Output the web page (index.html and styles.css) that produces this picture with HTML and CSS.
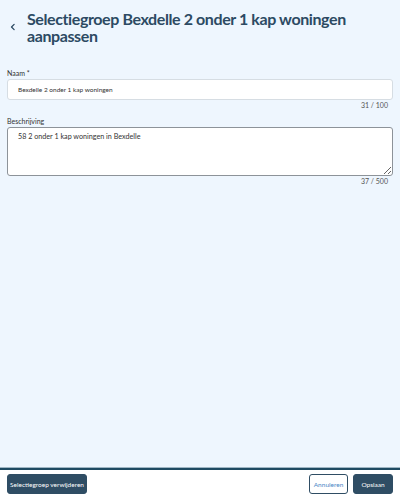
FILE: index.html
```html
<!DOCTYPE html>
<html lang="nl">
<head>
<meta charset="utf-8">
<title>Selectiegroep aanpassen</title>
<link rel="stylesheet" href="styles.css">
</head>
<body>
<div class="page">
  <main class="content">
    <header class="title-row">
      <button class="back" type="button" aria-label="Terug">
        <svg viewBox="0 0 8 10" width="6" height="8" aria-hidden="true"><path d="M5.5 1.5 L2 5 L5.5 8.5" fill="none" stroke="#2c4a63" stroke-width="1.7" stroke-linecap="round" stroke-linejoin="round"/></svg>
      </button>
      <h1 class="title">Selectiegroep Bexdelle 2 onder 1 kap woningen aanpassen</h1>
    </header>
    <form class="form">
      <div class="field">
        <label class="label" for="naam">Naam *</label>
        <input class="input" id="naam" type="text" value="Bexdelle 2 onder 1 kap woningen">
        <div class="counter">31 / 100</div>
      </div>
      <div class="field">
        <label class="label" for="beschrijving">Beschrijving</label>
        <textarea class="textarea" id="beschrijving">58 2 onder 1 kap woningen in Bexdelle</textarea>
        <div class="counter">37 / 500</div>
      </div>
    </form>
  </main>
  <footer class="actions">
    <button class="btn btn-primary btn-delete" type="button">Selectiegroep verwijderen</button>
    <div class="actions-right">
      <button class="btn btn-outline" type="button">Annuleren</button>
      <button class="btn btn-primary btn-save" type="button">Opslaan</button>
    </div>
  </footer>
</div>
</body>
</html>
```
FILE: styles.css
```css
* { box-sizing: border-box; }
html, body { margin: 0; padding: 0; }
body {
  font-family: Lato, "Open Sans", Arial, sans-serif;
  background: #eef6fe;
  color: #333;
}
.page {
  height: 498px;
  display: flex;
  flex-direction: column;
}
.content {
  flex: 1;
  padding: 10px 7px 0 7px;
}
.title-row {
  display: flex;
  align-items: center;
  gap: 8px;
}
.back {
  width: 12px;
  height: 20px;
  padding: 0;
  margin: 0;
  border: 0;
  background: transparent;
  display: flex;
  align-items: center;
  justify-content: center;
  flex: none;
}
.title {
  margin: 0;
  font-family: Lato, "Open Sans", sans-serif;
  font-weight: 700;
  font-size: 16px;
  line-height: 17px;
  color: #2c4a63;
  letter-spacing: -0.4px;
}
.form {
  margin-top: 25px;
  display: flex;
  flex-direction: column;
  gap: 8px;
}
.field {
  display: flex;
  flex-direction: column;
}
.label {
  font-size: 7px;
  line-height: 8px;
  color: #333;
  margin-bottom: 2px;
}
.input {
  height: 21px;
  width: 100%;
  border: 1px solid #d6dde3;
  border-radius: 3px;
  background: #fff;
  padding: 0 10px;
  font-family: Lato, sans-serif;
  font-size: 6.5px;
  color: #333;
}
.textarea {
  display: block;
  height: 49px;
  width: 100%;
  border: 1px solid #8d9399;
  border-radius: 3px;
  background: #fff;
  padding: 4px 10px;
  font-family: Lato, sans-serif;
  font-size: 7.2px;
  line-height: 10px;
  color: #333;
  resize: vertical;
  margin: 0;
}
.counter {
  text-align: right;
  font-size: 7px;
  line-height: 8px;
  color: #555;
  padding-right: 5px;
  margin-top: 1px;
}
.actions {
  height: 30px;
  flex: none;
  background: #fff;
  border-top: 2px solid #1e4a62;
  box-shadow: 0 -1px 0 #9fb6c4;
  display: flex;
  align-items: center;
  justify-content: space-between;
  padding: 0 7px;
}
.actions-right {
  display: flex;
  gap: 5px;
}
.btn {
  height: 20px;
  border-radius: 3px;
  font-family: Lato, sans-serif;
  font-size: 6.5px;
  padding: 0 4px;
  cursor: pointer;
}
.btn-primary {
  background: #2f4d64;
  border: 1px solid #2f4d64;
  color: #fff;
}
.btn-delete {
  width: 80px;
  padding: 0;
}
.btn-outline {
  background: #fff;
  border: 1px solid #2f4d64;
  color: #4a86c5;
  width: 39px;
  padding: 0;
}
.btn-save {
  width: 40px;
  padding: 0;
}
```
